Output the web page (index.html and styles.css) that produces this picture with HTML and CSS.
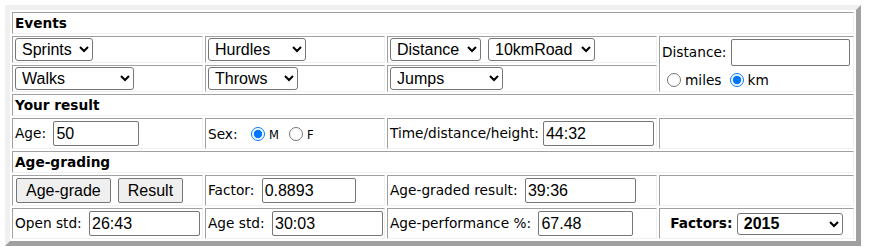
FILE: index.html
```html
<!DOCTYPE html>
<html>
    <head>
        <meta charset="utf-8">
        <title>Age-grading calculator</title>
        <link rel="stylesheet" href="styles.css">
    </head>
    <body>
        <table class="calc">
            <colgroup>
                <col class="col-a">
                <col class="col-b">
                <col class="col-c">
                <col class="col-d">
            </colgroup>
            <tr class="head-row"><td colspan="4">Events</td></tr>
            <tr class="select-row">
                <td><select class="sel sel-sprints"><option>Sprints</option></select></td>
                <td><select class="sel sel-hurdles"><option>Hurdles</option></select></td>
                <td><select class="sel sel-distance"><option>Distance</option></select><select class="sel sel-road"><option>10kmRoad</option></select></td>
                <td rowspan="2" class="dist-cell">
                    <div class="dist-line">Distance: <input type="text" class="field field-distance"></div>
                    <div class="unit-line"><input type="radio" name="unit" class="radio"><span class="unit">miles</span><input type="radio" name="unit" class="radio" checked><span class="unit">km</span></div>
                </td>
            </tr>
            <tr class="select-row">
                <td><select class="sel sel-walks"><option>Walks</option></select></td>
                <td><select class="sel sel-throws"><option>Throws</option></select></td>
                <td><select class="sel sel-jumps"><option>Jumps</option></select></td>
            </tr>
            <tr class="head-row"><td colspan="4">Your result</td></tr>
            <tr class="field-row">
                <td>Age: <input type="text" class="field field-age" value="50"></td>
                <td class="sex-cell">Sex: <input type="radio" name="sex" class="radio radio-m" checked><span class="sex">M</span><input type="radio" name="sex" class="radio radio-f"><span class="sex">F</span></td>
                <td>Time/distance/height:<input type="text" class="field field-time" value="44:32"></td>
                <td></td>
            </tr>
            <tr class="head-row"><td colspan="4">Age-grading</td></tr>
            <tr class="field-row">
                <td><button class="btn btn-grade">Age-grade</button><button class="btn">Result</button></td>
                <td>Factor: <input type="text" class="field field-factor" value="0.8893"></td>
                <td>Age-graded result: <input type="text" class="field field-result" value="39:36"></td>
                <td></td>
            </tr>
            <tr class="field-row">
                <td>Open std: <input type="text" class="field field-std" value="26:43"></td>
                <td>Age std: <input type="text" class="field field-std" value="30:03"></td>
                <td>Age-performance %: <input type="text" class="field field-perf" value="67.48"></td>
                <td class="factors-cell"><b>Factors:</b> <select class="sel sel-factors"><option>2015</option></select></td>
            </tr>
        </table>
    </body>
</html>
```

FILE: styles.css
```css
body {
    margin: 5px;
    background: #fff;
    color: #000;
    font-family: "DejaVu Sans", Verdana, sans-serif;
    font-size: 13.7px;
}

.calc {
    width: 856px;
    table-layout: fixed;
    border-collapse: separate;
    border-spacing: 2px;
    border: 5px solid;
    border-color: #f0f0f0 #a0a0a0 #a0a0a0 #f0f0f0;
}

.col-a { width: 191px; }
.col-b { width: 180px; }
.col-c { width: 270px; }
.col-d { width: 195px; }

.calc td {
    border: 1px solid;
    border-color: #a0a0a0 #f0f0f0 #f0f0f0 #a0a0a0;
    padding: 1px 2px;
    vertical-align: middle;
    white-space: nowrap;
}

.head-row td {
    font-weight: bold;
    line-height: 16px;
    padding: 2px 2px;
}

.select-row td {
    height: 23px;
}

.field-row td {
    height: 27px;
}

.sel {
    font-family: "Liberation Sans", Arial, sans-serif;
    font-size: 16px;
    height: 23px;
    padding: 0 2px;
    margin: 0;
    vertical-align: middle;
    color: #000;
    background: #fff;
    border: 1px solid #767676;
    border-radius: 3px;
}

.sel-sprints { width: 78px; }
.sel-hurdles { width: 98px; }
.sel-distance { width: 91px; margin-right: 7px; }
.sel-road { width: 107px; }
.sel-walks { width: 119px; }
.sel-throws { width: 90px; }
.sel-jumps { width: 113px; }
.sel-factors { width: 106px; font-weight: bold; height: 22px; }

.field {
    font-family: "Liberation Sans", Arial, sans-serif;
    font-size: 16px;
    box-sizing: border-box;
    height: 25px;
    padding: 1px 2px;
    margin: 0 0 0 3px;
    vertical-align: middle;
    border: 1px solid #767676;
    border-radius: 2px;
    color: #000;
}

.field-age { width: 86px; }
.field-distance { width: 119px; height: 27px; margin-left: 0; }
.field-time { width: 111px; margin-left: 4px; }
.field-factor { width: 94px; }
.field-result { width: 111px; }
.field-std { width: 111px; }
.field-perf { width: 95px; }

.dist-line {
    padding-top: 1px;
}

.unit-line {
    padding-top: 4px;
    height: 20px;
    line-height: 20px;
}

.radio {
    width: 14px;
    height: 14px;
    margin: 0 4px 0 5px;
    vertical-align: -2px;
}

.unit {
    margin-right: 3px;
}

.sex {
    font-size: 11.5px;
    margin-right: 1px;
}

.radio-m {
    margin-left: 9px;
}

.radio-f {
    margin-left: 9px;
}

.btn {
    font-family: "Liberation Sans", Arial, sans-serif;
    font-size: 16px;
    height: 25px;
    padding: 1px 9px;
    margin: 0 6px 0 1px;
    vertical-align: middle;
    background: #efefef;
    border: 1px solid #767676;
    border-radius: 2px;
    color: #000;
}

.factors-cell {
    text-align: center;
}
```
